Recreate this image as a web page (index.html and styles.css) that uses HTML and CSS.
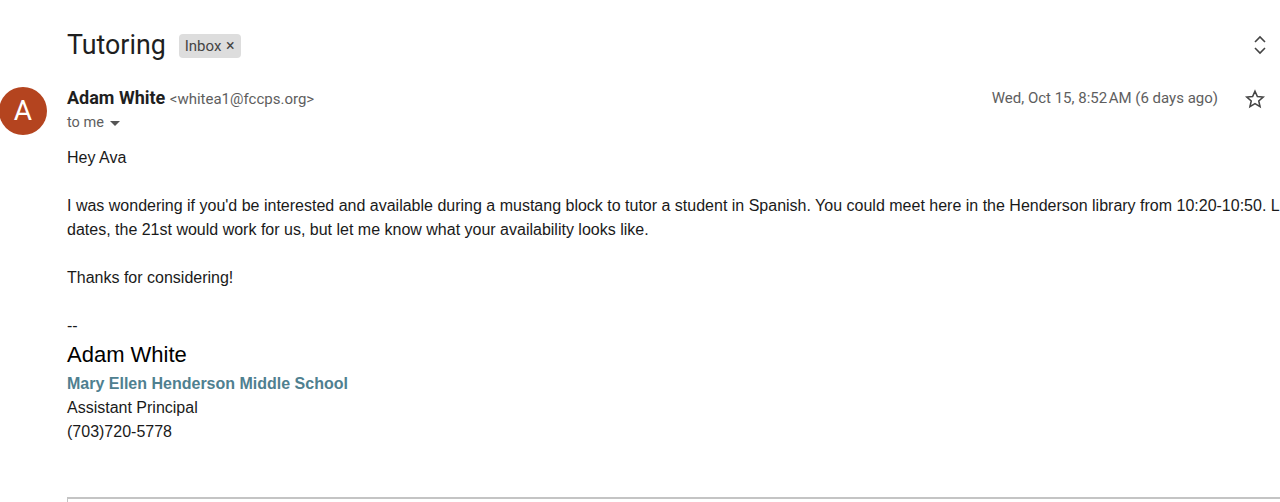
FILE: index.html
```html
<!DOCTYPE html>
<html>
<head>
<meta charset="utf-8">
<link rel="stylesheet" href="styles.css">
</head>
<body>
<div class="page">
  <div class="subject-row">
    <h1 class="subject">Tutoring</h1>
    <span class="chip">Inbox <span class="chip-x">×</span></span>
    <span class="spacer"></span>
    <svg class="updown" width="16" height="24" viewBox="0 0 16 24" aria-hidden="true">
      <path d="M3 9 L8 4 L13 9" fill="none" stroke="#444" stroke-width="1.6"/>
      <path d="M3 15 L8 20 L13 15" fill="none" stroke="#444" stroke-width="1.6"/>
    </svg>
  </div>
  <div class="message">
    <div class="avatar">A</div>
    <div class="msg-main">
      <div class="header">
        <div class="from">
          <div class="sender-line"><span class="sender">Adam White</span> <span class="email">&lt;whitea1@fccps.org&gt;</span></div>
          <div class="tome">to me <svg class="caret" width="10" height="6" viewBox="0 0 10 6"><path d="M0 0 L10 0 L5 5 Z" fill="#555"/></svg></div>
        </div>
        <div class="meta">
          <span class="date">Wed, Oct 15, 8:52&#8202;AM (6 days ago)</span>
          <svg class="star" width="22" height="22" viewBox="0 0 24 24" aria-hidden="true">
            <path d="M12 3.5 L14.6 9.3 L20.9 9.9 L16.1 14.1 L17.5 20.3 L12 17.1 L6.5 20.3 L7.9 14.1 L3.1 9.9 L9.4 9.3 Z" fill="none" stroke="#444" stroke-width="1.7" stroke-linejoin="miter"/>
          </svg>
        </div>
      </div>
      <div class="body">
        <p>Hey Ava</p>
        <p class="blank"></p>
        <p class="nowrap">I was wondering if you'd be interested and available during a mustang block to tutor a student in Spanish. You could meet here in the Henderson library from 10:20-10:50. Looking at the</p>
        <p class="nowrap">dates, the 21st would work for us, but let me know what your availability looks like.</p>
        <p class="blank"></p>
        <p>Thanks for considering!</p>
        <p class="blank"></p>
        <p>--</p>
        <p class="sig-name">Adam White</p>
        <p class="sig-school">Mary Ellen Henderson Middle School</p>
        <p>Assistant Principal</p>
        <p>(703)720-5778</p>
      </div>
      <div class="reply-box"></div>
    </div>
  </div>
</div>
</body>
</html>
```
FILE: styles.css
```css
html, body {
  margin: 0;
  padding: 0;
  background: #fff;
  overflow: hidden;
}
body {
  width: 1280px;
  height: 502px;
  font-family: "Liberation Sans", Arial, sans-serif;
  color: #222;
}
.page {
  padding-top: 26px;
}
.subject-row {
  display: flex;
  align-items: center;
  padding-left: 67px;
  padding-right: 12px;
  height: 38px;
}
.subject {
  margin: 0;
  font-family: Roboto, "Noto Sans", sans-serif;
  font-weight: 400;
  font-size: 26.8px;
  color: #1f1f1f;
}
.chip {
  margin-left: 13px;
  background: #dddddd;
  border-radius: 4px;
  padding: 2px 6px;
  font-family: Roboto, "Noto Sans", sans-serif;
  font-size: 15px;
  color: #444;
  line-height: 19px;
  margin-top: 1px;
}
.chip-x {
  margin-left: 1px;
  font-size: 16px;
}
.spacer { flex: 1; }
.updown { display: block; }

.message {
  display: flex;
  margin-top: 23px;
}
.avatar {
  flex: none;
  width: 48px;
  height: 48px;
  border-radius: 50%;
  background: #b4441f;
  color: #fff;
  font-family: Roboto, "Noto Sans", sans-serif;
  font-size: 28px;
  line-height: 48px;
  text-align: center;
  margin-left: -1px;
}
.msg-main {
  flex: 1;
  margin-left: 20px;
  min-width: 0;
}
.header {
  display: flex;
  justify-content: space-between;
}
.sender-line {
  line-height: 22px;
}
.sender {
  font-family: Roboto, "Noto Sans", sans-serif;
  font-weight: 700;
  font-size: 18px;
  color: #1f1f1f;
}
.email {
  font-family: Roboto, "Noto Sans", sans-serif;
  font-size: 15px;
  color: #5e5e5e;
}
.tome {
  font-family: Roboto, "Noto Sans", sans-serif;
  font-size: 14.5px;
  color: #5e5e5e;
  line-height: 20px;
  margin-top: 3px;
  display: flex;
  align-items: center;
  gap: 6px;
}
.caret { display: block; margin-top: 1px; }
.meta {
  display: flex;
  align-items: flex-start;
  padding-right: 14px;
}
.date {
  font-family: Roboto, "Noto Sans", sans-serif;
  font-size: 15px;
  color: #5e5e5e;
  line-height: 22px;
}
.star {
  display: block;
  margin-left: 26px;
  margin-top: 1px;
}
.body {
  margin-top: 13px;
  font-size: 16px;
  line-height: 24px;
}
.body p {
  margin: 0;
  min-height: 24px;
  color: #1a1a1a;
}
.nowrap { white-space: nowrap; }
.body .sig-name {
  font-size: 22px;
  line-height: 34px;
  color: #000;
}
.body .sig-school {
  font-weight: 700;
  color: #4f8090;
}
.reply-box {
  margin-top: 53px;
  height: 20px;
  border-top: 2px solid #c4c4c4;
  border-left: 1px solid #c4c4c4;
}
```
